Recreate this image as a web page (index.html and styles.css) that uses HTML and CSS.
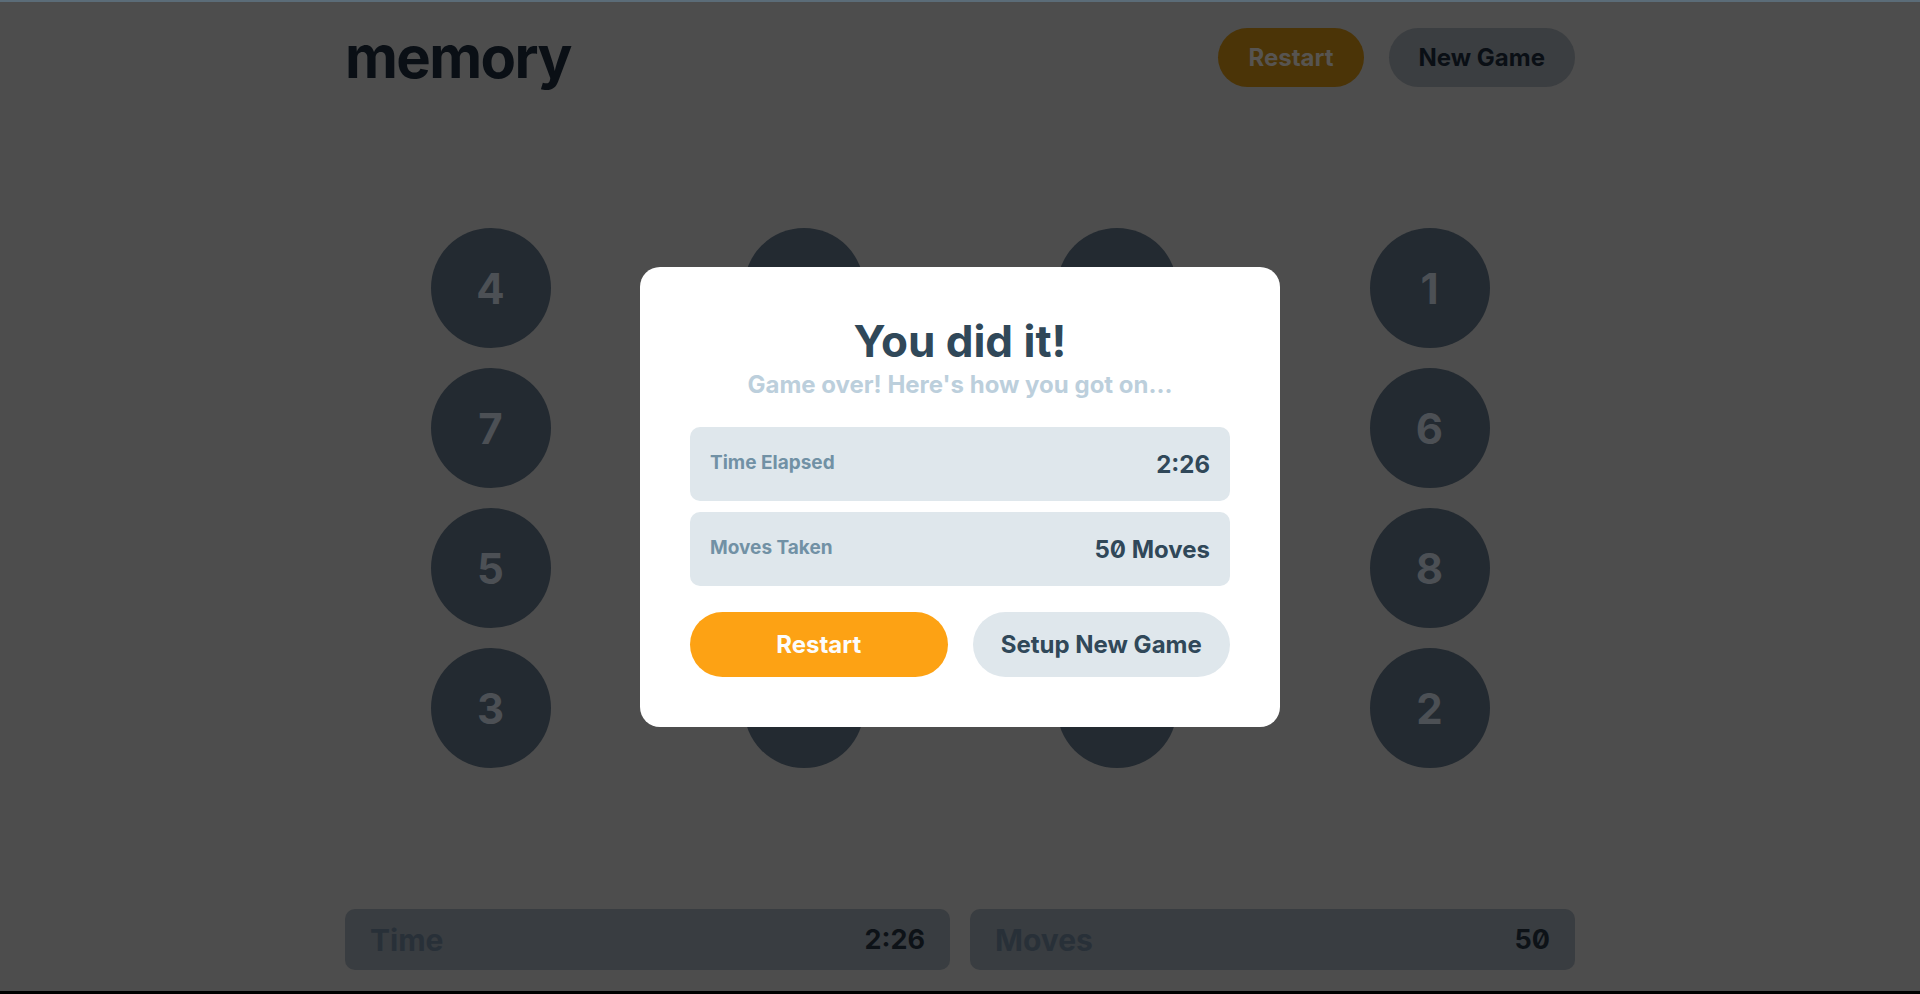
FILE: index.html
```html
<!DOCTYPE html>
<html lang="en">
<head>
<meta charset="utf-8">
<title>memory</title>
<link rel="stylesheet" href="styles.css">
</head>
<body>
<div class="page">
  <header class="header">
    <h1 class="logo">memory</h1>
    <div class="header-actions">
      <button class="btn btn-orange-dim">Restart</button>
      <button class="btn btn-grey-dim">New Game</button>
    </div>
  </header>

  <main class="board-wrap">
    <div class="board">
      <div class="circle">4</div>
      <div class="circle"></div>
      <div class="circle"></div>
      <div class="circle">1</div>
      <div class="circle">7</div>
      <div class="circle"></div>
      <div class="circle"></div>
      <div class="circle">6</div>
      <div class="circle">5</div>
      <div class="circle"></div>
      <div class="circle"></div>
      <div class="circle">8</div>
      <div class="circle">3</div>
      <div class="circle"></div>
      <div class="circle"></div>
      <div class="circle">2</div>
    </div>
  </main>

  <footer class="footer">
    <div class="stat-bar">
      <span class="stat-bar-label">Time</span>
      <span class="stat-bar-value">2:26</span>
    </div>
    <div class="stat-bar">
      <span class="stat-bar-label">Moves</span>
      <span class="stat-bar-value">50</span>
    </div>
  </footer>
</div>

<div class="overlay">
  <div class="modal">
    <h2 class="modal-title">You did it!</h2>
    <p class="modal-subtitle">Game over! Here's how you got on...</p>
    <div class="results">
      <div class="result-row">
        <span class="result-label">Time Elapsed</span>
        <span class="result-value">2:26</span>
      </div>
      <div class="result-row">
        <span class="result-label">Moves Taken</span>
        <span class="result-value">50 Moves</span>
      </div>
    </div>
    <div class="modal-actions">
      <button class="btn btn-modal btn-orange">Restart</button>
      <button class="btn btn-modal btn-light">Setup New Game</button>
    </div>
  </div>
</div>
</body>
</html>
```

FILE: styles.css
```css
* {
  box-sizing: border-box;
}

html, body {
  margin: 0;
  padding: 0;
}

body {
  background: #4d4d4d;
  font-family: "Inter", "Liberation Sans", sans-serif;
  font-weight: 700;
  font-feature-settings: "zero" 1;
  overflow: hidden;
}

.page {
  height: 994px;
  display: flex;
  flex-direction: column;
  border-top: 2px solid #5b6c78;
  border-bottom: 3px solid #000;
}

.header {
  width: 1230px;
  margin: 0 auto;
  padding-top: 26px;
  display: flex;
  justify-content: space-between;
  align-items: center;
}

.logo {
  margin: 0;
  font-size: 58px;
  line-height: 59px;
  letter-spacing: -1.6px;
  color: #0a0f15;
  font-weight: 700;
}

.header-actions {
  display: flex;
  gap: 25px;
}

.btn {
  border: none;
  font-family: inherit;
  font-weight: 700;
  font-size: 24px;
  border-radius: 999px;
  padding: 0 30px;
  height: 59px;
  white-space: nowrap;
  cursor: pointer;
  font-feature-settings: "zero" 1;
}

.btn-orange-dim {
  background: #4b3407;
  color: #575451;
}

.btn-grey-dim {
  background: #3b3e41;
  color: #0a0f15;
}

.board-wrap {
  flex: 1;
  display: flex;
  align-items: center;
  justify-content: center;
}

.board {
  display: grid;
  grid-template-columns: repeat(4, 120px);
  grid-auto-rows: 120px;
  column-gap: 193px;
  row-gap: 20px;
}

.circle {
  width: 120px;
  height: 120px;
  border-radius: 50%;
  background: #232a31;
  color: #4c5055;
  font-size: 42px;
  display: flex;
  align-items: center;
  justify-content: center;
}

.footer {
  width: 1230px;
  margin: 0 auto;
  padding-bottom: 21px;
  display: flex;
  gap: 20px;
}

.stat-bar {
  flex: 1;
  height: 61px;
  border-radius: 10px;
  background: #393d41;
  padding: 0 25px;
  display: flex;
  justify-content: space-between;
  align-items: center;
}

.stat-bar-label {
  font-size: 30px;
  color: #283038;
}

.stat-bar-value {
  font-size: 27px;
  color: #0d1217;
}

.overlay {
  position: fixed;
  inset: 0;
  display: flex;
  align-items: center;
  justify-content: center;
}

.modal {
  width: 640px;
  background: #fff;
  border-radius: 20px;
  padding: 50px;
  text-align: center;
}

.modal-title {
  margin: 0;
  font-size: 44px;
  line-height: 48px;
  color: #304859;
}

.modal-subtitle {
  margin: 5px 0 0;
  font-size: 24px;
  line-height: 29px;
  color: #bccfdc;
}

.results {
  margin-top: 28px;
  display: flex;
  flex-direction: column;
  gap: 11px;
}

.result-row {
  height: 74px;
  border-radius: 10px;
  background: #dfe7ec;
  padding: 0 20px;
  display: flex;
  justify-content: space-between;
  align-items: center;
}

.result-label {
  font-size: 19px;
  color: #7191a5;
  margin-top: -4px;
}

.result-value {
  font-size: 24px;
  color: #304859;
}

.modal-actions {
  margin-top: 26px;
  display: flex;
  gap: 25px;
}

.btn-modal {
  flex: 1 1 0;
  padding: 0;
  height: 65px;
}

.btn-orange {
  background: #fda214;
  color: #fcfcfc;
}

.btn-light {
  background: #dfe7ec;
  color: #304859;
}
```
